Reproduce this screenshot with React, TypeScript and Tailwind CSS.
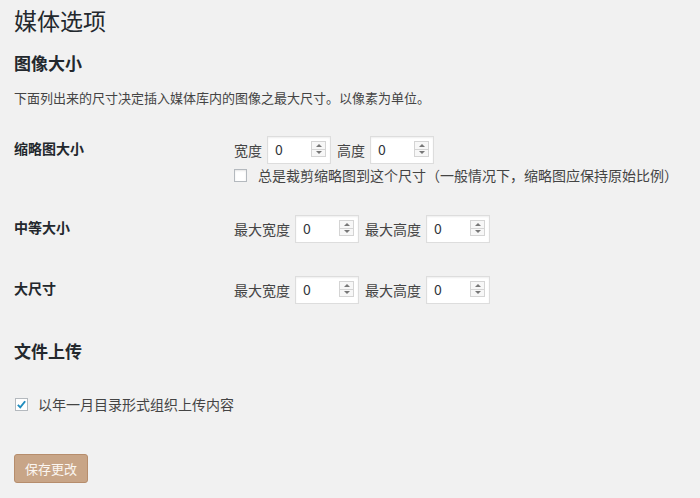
import React from "react";

const FONT = "font-['Microsoft_YaHei','Noto_Sans_CJK_SC',sans-serif]";

// number field with the small up/down spinner on the right
const NumberBox = ({ value }: { value: string }) => (
  <div className="relative h-[28px] w-[64px] border border-[#dddddd] bg-white shadow-[inset_0_1px_2px_rgba(0,0,0,0.07)]">
    <span className="absolute left-[7px] top-0 text-[14px] leading-[25px] text-[#32373c]">{value}</span>
    <div className="absolute right-[4px] top-[4px] flex h-[16px] w-[15px] flex-col border border-[#d4d4d4] bg-[#f7f7f7]">
      <div className="flex flex-1 items-center justify-center border-b border-[#d4d4d4]">
        <div className="h-0 w-0 border-x-[3px] border-b-[3px] border-x-transparent border-b-[#777]" />
      </div>
      <div className="flex flex-1 items-center justify-center">
        <div className="h-0 w-0 border-x-[3px] border-t-[3px] border-x-transparent border-t-[#777]" />
      </div>
    </div>
  </div>
);

const Field = ({ label, first }: { label: string; first?: boolean }) => (
  <div className={`flex items-center ${first ? "" : "ml-[6px]"}`}>
    <span className="text-[14px] leading-[26px] text-[#444]">{label}</span>
    <div className="ml-[5px]">
      <NumberBox value="0" />
    </div>
  </div>
);

const SizeRow = ({
  title,
  w,
  h,
  className,
  children,
}: {
  title: string;
  w: string;
  h: string;
  className?: string;
  children?: React.ReactNode;
}) => (
  <div className={`flex ${className ?? ""}`}>
    <div className="w-[220px] text-[14px] font-bold leading-[24px] text-[#23282d]">{title}</div>
    <div className="flex flex-col">
      <div className="flex h-[28px] items-center">
        <Field label={w} first />
        <Field label={h} />
      </div>
      {children}
    </div>
  </div>
);

export default function App() {
  return (
    <div className={`min-h-screen bg-[#f1f1f1] px-[14px] pt-[6px] text-[#444] [text-spacing-trim:space-all] ${FONT}`}>
      <h1 className="text-[23px] font-normal leading-[29px] text-[#23282d]">媒体选项</h1>

      <h2 className="mt-[16px] text-[17px] font-bold leading-[24px] text-[#23282d]">图像大小</h2>
      <p className="mt-[13px] text-[13px] leading-[20px]">
        下面列出来的尺寸决定插入媒体库内的图像之最大尺寸。以像素为单位。
      </p>

      <SizeRow title="缩略图大小" w="宽度" h="高度" className="mt-[28px]">
        <label className="mt-[1px] flex h-[20px] items-center">
          <span className="h-[13px] w-[13px] border border-[#b4b9be] bg-white shadow-[inset_0_1px_2px_rgba(0,0,0,0.1)]" />
          <span className="ml-[11px] text-[14px] leading-[20px] text-[#444]">
            总是裁剪缩略图到这个尺寸（一般情况下，缩略图应保持原始比例）
          </span>
        </label>
      </SizeRow>

      <SizeRow title="中等大小" w="最大宽度" h="最大高度" className="mt-[30px]" />
      <SizeRow title="大尺寸" w="最大宽度" h="最大高度" className="mt-[33px]" />

      <h2 className="mt-[35px] text-[17px] font-bold leading-[24px] text-[#23282d]">文件上传</h2>

      <label className="mt-[31px] flex h-[20px] items-center">
        <span className="relative ml-[1px] h-[13px] w-[13px] border border-[#b4b9be] bg-white">
          <svg viewBox="0 0 16 16" className="absolute left-[-1px] top-[-1px] h-[13px] w-[13px]">
            <path d="M3.5 8.5 L6.5 11.5 L12.5 4" fill="none" stroke="#1e8cbe" strokeWidth="2.4" />
          </svg>
        </span>
        <span className="ml-[10px] text-[14px] leading-[20px] text-[#444]">以年一月目录形式组织上传内容</span>
      </label>

      <button className="mt-[40px] h-[29px] w-[74px] rounded-[3px] border border-[#b68d6c] bg-[#c8a587] text-[13px] leading-[27px] text-[#fbf6f1]">
        保存更改
      </button>
    </div>
  );
}
